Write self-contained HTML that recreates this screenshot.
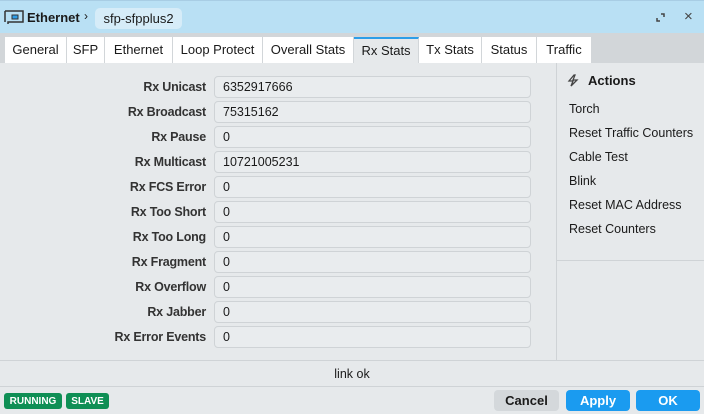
<!DOCTYPE html>
<html><head><style>
*{box-sizing:border-box;margin:0;padding:0}
body{width:704px;height:414px;overflow:hidden;background:#e6e9eb;font-family:"Liberation Sans",sans-serif;font-size:13px;color:#1a1a1a;position:relative}
.title{position:absolute;left:0;top:0;width:704px;height:33px;background:#b9e0f4;border-top:1px solid #a8cde4}
.tabs{position:absolute;left:0;top:33px;width:704px;height:30px;background:#d2d6d9}
.tab{position:absolute;top:4px;height:26px;background:#fff;border-right:1px solid #d2d6d9;font-size:13px;line-height:26px;text-align:center}
.tab.act{background:#e6e9eb;border-top:2px solid #2d9ee8;line-height:24px}
.lbl{position:absolute;right:498px;font-size:12.5px;font-weight:bold;color:#333;text-align:right;letter-spacing:-0.2px}
.fld{position:absolute;left:214px;width:317px;height:22px;border:1px solid #cfd3d6;border-radius:4px;background:#e9ecee;padding-left:8px;line-height:20px;font-size:12.5px}
.act-i{position:absolute;left:569px;font-size:12.5px}
.badge{position:absolute;top:393px;height:16px;background:#0f8f55;color:#fff;font-size:10px;font-weight:bold;line-height:17px;border-radius:3px;text-align:center}
.btn{position:absolute;top:390px;height:21px;border-radius:4px;font-weight:bold;font-size:13px;line-height:21px;text-align:center}
</style></head><body>
<div class="title">
<svg style="position:absolute;left:4px;top:9px" width="20" height="15" viewBox="0 0 20 15"><path d="M1 1v11M1 1h18v11H4v2" fill="none" stroke="#333" stroke-width="1.5"/><rect x="8" y="5" width="6" height="4" fill="#2d9ee8" stroke="#333"/></svg>
<span style="position:absolute;left:27px;top:9px;font-weight:bold;font-size:13px">Ethernet</span>
<span style="position:absolute;left:84px;top:8px;font-size:12px">›</span>
<div style="position:absolute;left:95px;top:7px;width:87px;height:21px;background:#d6ecf8;border-radius:5px;font-size:13px;line-height:21px;text-align:center">sfp-sfpplus2</div>
<svg style="position:absolute;left:656px;top:12px" width="9" height="9" viewBox="0 0 9 9"><path d="M5 1h3v3M4 8H1V5" fill="none" stroke="#444" stroke-width="1.5"/></svg>
<span style="position:absolute;left:684px;top:7px;font-size:15px;color:#444">×</span>
</div>
<div class="tabs">
<div class="tab" style="left:5px;width:62px">General</div>
<div class="tab" style="left:67px;width:38px">SFP</div>
<div class="tab" style="left:105px;width:68px">Ethernet</div>
<div class="tab" style="left:173px;width:90px">Loop Protect</div>
<div class="tab" style="left:263px;width:91px">Overall Stats</div>
<div class="tab act" style="left:354px;width:65px">Rx Stats</div>
<div class="tab" style="left:419px;width:63px">Tx Stats</div>
<div class="tab" style="left:482px;width:55px">Status</div>
<div class="tab" style="left:537px;width:54px;border-right:none">Traffic</div>
</div>
<div class="lbl" style="top:80px">Rx Unicast</div><div class="fld" style="top:76px">6352917666</div>
<div class="lbl" style="top:105px">Rx Broadcast</div><div class="fld" style="top:101px">75315162</div>
<div class="lbl" style="top:130px">Rx Pause</div><div class="fld" style="top:126px">0</div>
<div class="lbl" style="top:155px">Rx Multicast</div><div class="fld" style="top:151px">10721005231</div>
<div class="lbl" style="top:180px">Rx FCS Error</div><div class="fld" style="top:176px">0</div>
<div class="lbl" style="top:205px">Rx Too Short</div><div class="fld" style="top:201px">0</div>
<div class="lbl" style="top:230px">Rx Too Long</div><div class="fld" style="top:226px">0</div>
<div class="lbl" style="top:255px">Rx Fragment</div><div class="fld" style="top:251px">0</div>
<div class="lbl" style="top:280px">Rx Overflow</div><div class="fld" style="top:276px">0</div>
<div class="lbl" style="top:305px">Rx Jabber</div><div class="fld" style="top:301px">0</div>
<div class="lbl" style="top:330px">Rx Error Events</div><div class="fld" style="top:326px">0</div>
<div style="position:absolute;left:556px;top:63px;width:1px;height:297px;background:#cfd3d6"></div>
<div style="position:absolute;left:557px;top:260px;width:147px;height:1px;background:#cfd3d6"></div>
<svg style="position:absolute;left:567px;top:74px" width="13" height="13" viewBox="0 0 13 13"><path d="M7 1L2 7h4l-2 5 6-6H6l2-5z" fill="none" stroke="#444" stroke-width="1.3"/></svg>
<span style="position:absolute;left:588px;top:73px;font-weight:bold;font-size:13px">Actions</span>
<div class="act-i" style="top:102px">Torch</div>
<div class="act-i" style="top:126px">Reset Traffic Counters</div>
<div class="act-i" style="top:150px">Cable Test</div>
<div class="act-i" style="top:174px">Blink</div>
<div class="act-i" style="top:198px">Reset MAC Address</div>
<div class="act-i" style="top:222px">Reset Counters</div>
<div style="position:absolute;left:0;top:360px;width:704px;height:1px;background:#cfd3d6"></div>
<div style="position:absolute;left:0;top:367px;width:704px;text-align:center;font-size:12.5px">link ok</div>
<div style="position:absolute;left:0;top:386px;width:704px;height:1px;background:#cfd3d6"></div>
<div class="badge" style="left:4px;width:58px">RUNNING</div>
<div class="badge" style="left:66px;width:43px">SLAVE</div>
<div class="btn" style="left:494px;width:65px;background:#d4d8db">Cancel</div>
<div class="btn" style="left:566px;width:64px;background:#1a9bf0;color:#fff">Apply</div>
<div class="btn" style="left:636px;width:64px;background:#1a9bf0;color:#fff">OK</div>
</body></html>
